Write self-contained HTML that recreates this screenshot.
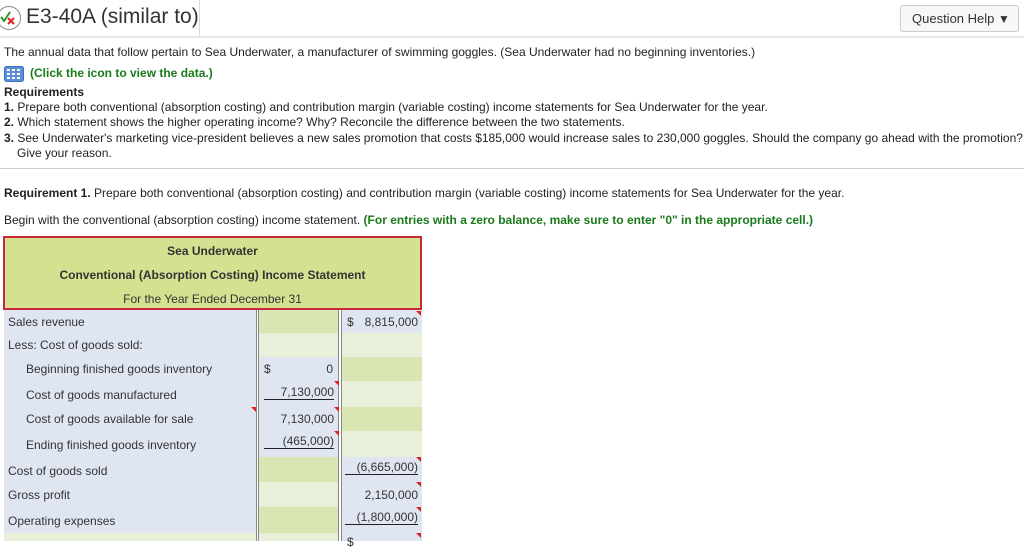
<!DOCTYPE html>
<html><head><meta charset="utf-8"><style>
*{margin:0;padding:0;box-sizing:border-box}
body{width:1024px;height:541px;overflow:hidden;background:#fff;font-family:"Liberation Sans",Arial,sans-serif;color:#222;font-size:12px;position:relative}
.a{position:absolute;white-space:nowrap}
.g{color:#1a7a1a;font-weight:bold}
.c{position:absolute;height:25px}
.G{background:#d9e6b3}.L{background:#e8f0da}.B{background:#dfe6f1}
.t{position:absolute;line-height:14px;white-space:nowrap;font-size:12px;color:#333}
.tri{position:absolute;width:0;height:0;border-top:5px solid #d22;border-left:5px solid transparent}
.ul{border-bottom:1px solid #222}
</style></head><body>
<div class="a" style="left:0;top:0;width:200px;height:36px;border-right:1px solid #d8dbe3"></div>
<div class="a" style="left:0;top:36px;width:1024px;height:2px;background:#e4e6ec"></div>
<svg class="a" style="left:-4px;top:5px" width="26" height="26" viewBox="0 0 26 26"><circle cx="13" cy="13" r="11.5" fill="#fff" stroke="#888" stroke-width="1"/><path d="M5 12l3 4 6-9" fill="none" stroke="#2a9a2a" stroke-width="2"/><path d="M12 13l6 6M18 13l-6 6" stroke="#d22" stroke-width="2"/></svg>
<div class="a" style="left:26px;top:5px;font-size:21px;color:#333">E3-40A (similar to)</div>
<div class="a" style="left:900px;top:5px;width:119px;height:27px;border:1px solid #ccc;border-radius:3px;background:#f7f7f7;font-size:13px;color:#333;line-height:25px;padding-left:11px">Question Help <span style="font-size:12px">▼</span></div>

<div class="a" style="left:4px;top:45px">The annual data that follow pertain to Sea Underwater, a manufacturer of swimming goggles. (Sea Underwater had no beginning inventories.)</div>
<svg class="a" style="left:4px;top:66px" width="20" height="16" viewBox="0 0 20 16"><rect x="0.5" y="0.5" width="19" height="15" rx="2" fill="#5b8fd6" stroke="#3a6fbf"/><g fill="#fff"><rect x="3" y="3" width="3" height="2"/><rect x="8" y="3" width="3" height="2"/><rect x="13" y="3" width="3" height="2"/><rect x="3" y="7" width="3" height="2"/><rect x="8" y="7" width="3" height="2"/><rect x="13" y="7" width="3" height="2"/><rect x="3" y="11" width="3" height="2"/><rect x="8" y="11" width="3" height="2"/><rect x="13" y="11" width="3" height="2"/></g></svg>
<div class="a g" style="left:30px;top:66px">(Click the icon to view the data.)</div>
<div class="a" style="left:4px;top:85px;font-weight:bold">Requirements</div>
<div class="a" style="left:4px;top:100px"><b>1.</b> Prepare both conventional (absorption costing) and contribution margin (variable costing) income statements for Sea Underwater for the year.</div>
<div class="a" style="left:4px;top:115px"><b>2.</b> Which statement shows the higher operating income? Why? Reconcile the difference between the two statements.</div>
<div class="a" style="left:4px;top:131px"><b>3.</b> See Underwater's marketing vice-president believes a new sales promotion that costs $185,000 would increase sales to 230,000 goggles. Should the company go ahead with the promotion?</div>
<div class="a" style="left:17px;top:146px">Give your reason.</div>
<div class="a" style="left:0;top:168px;width:1024px;height:1px;background:#c8ccd8"></div>
<div class="a" style="left:4px;top:186px"><b>Requirement 1.</b> Prepare both conventional (absorption costing) and contribution margin (variable costing) income statements for Sea Underwater for the year.</div>
<div class="a" style="left:4px;top:213px">Begin with the conventional (absorption costing) income statement. <span class="g">(For entries with a zero balance, make sure to enter "0" in the appropriate cell.)</span></div>

<div class="a" style="left:3px;top:236px;width:419px;height:74px;background:#d5e191;border:2px solid #c8283a"></div>
<div class="a" style="left:3px;top:244px;width:419px;text-align:center;font-weight:bold;color:#333">Sea Underwater</div>
<div class="a" style="left:3px;top:268px;width:419px;text-align:center;font-weight:bold;color:#333">Conventional (Absorption Costing) Income Statement</div>
<div class="a" style="left:3px;top:292px;width:419px;text-align:center;color:#333">For the Year Ended December 31</div>

<div class="a B" style="left:4px;top:310px;width:252px;height:223px"></div>
<div class="a L" style="left:4px;top:533px;width:252px;height:8px"></div>
<div class="a" style="left:256px;top:310px;width:3px;height:231px;border-left:1px solid #888;border-right:1px solid #888;background:#fff"></div>
<div class="a" style="left:338px;top:310px;width:4px;height:231px;border-left:1px solid #888;border-right:1px solid #888;background:#fff"></div>

<div class="c G" style="left:259px;top:310px;width:79px;height:23px"></div><div class="c B" style="left:342px;top:310px;width:80px;height:23px"></div>
<div class="c L" style="left:259px;top:333px;width:79px;height:24px"></div><div class="c L" style="left:342px;top:333px;width:80px;height:24px"></div>
<div class="c B" style="left:259px;top:357px;width:79px;height:24px"></div><div class="c G" style="left:342px;top:357px;width:80px;height:24px"></div>
<div class="c B" style="left:259px;top:381px;width:79px;height:26px"></div><div class="c L" style="left:342px;top:381px;width:80px;height:26px"></div>
<div class="c B" style="left:259px;top:407px;width:79px;height:24px"></div><div class="c G" style="left:342px;top:407px;width:80px;height:24px"></div>
<div class="c B" style="left:259px;top:431px;width:79px;height:26px"></div><div class="c L" style="left:342px;top:431px;width:80px;height:26px"></div>
<div class="c G" style="left:259px;top:457px;width:79px;height:25px"></div><div class="c B" style="left:342px;top:457px;width:80px;height:25px"></div>
<div class="c L" style="left:259px;top:482px;width:79px;height:25px"></div><div class="c B" style="left:342px;top:482px;width:80px;height:25px"></div>
<div class="c G" style="left:259px;top:507px;width:79px;height:26px"></div><div class="c B" style="left:342px;top:507px;width:80px;height:26px"></div>
<div class="c L" style="left:259px;top:533px;width:79px;height:8px"></div><div class="c B" style="left:342px;top:533px;width:80px;height:8px"></div>

<div class="t" style="left:8px;top:315px">Sales revenue</div>
<div class="t" style="left:8px;top:338px">Less: Cost of goods sold:</div>
<div class="t" style="left:26px;top:362px">Beginning finished goods inventory</div>
<div class="t" style="left:26px;top:388px">Cost of goods manufactured</div>
<div class="t" style="left:26px;top:412px">Cost of goods available for sale</div>
<div class="t" style="left:26px;top:438px">Ending finished goods inventory</div>
<div class="t" style="left:8px;top:464px">Cost of goods sold</div>
<div class="t" style="left:8px;top:488px">Gross profit</div>
<div class="t" style="left:8px;top:514px">Operating expenses</div>

<div class="t" style="left:347px;top:315px">$</div><div class="t" style="left:356px;top:315px;width:62px;text-align:right">8,815,000</div>
<div class="t" style="left:264px;top:362px">$</div><div class="t" style="left:290px;top:362px;width:43px;text-align:right">0</div>
<div class="t ul" style="left:264px;top:385px;width:70px;text-align:right">7,130,000</div>
<div class="t" style="left:264px;top:412px;width:70px;text-align:right">7,130,000</div>
<div class="t ul" style="left:264px;top:434px;width:70px;text-align:right">(465,000)</div>
<div class="t ul" style="left:345px;top:460px;width:73px;text-align:right">(6,665,000)</div>
<div class="t" style="left:345px;top:488px;width:73px;text-align:right">2,150,000</div>
<div class="t ul" style="left:345px;top:510px;width:73px;text-align:right">(1,800,000)</div>
<div class="t" style="left:347px;top:535px">$</div>

<div class="tri" style="left:416px;top:311px"></div>
<div class="tri" style="left:334px;top:381px"></div>
<div class="tri" style="left:251px;top:407px"></div>
<div class="tri" style="left:334px;top:407px"></div>
<div class="tri" style="left:334px;top:431px"></div>
<div class="tri" style="left:416px;top:457px"></div>
<div class="tri" style="left:416px;top:482px"></div>
<div class="tri" style="left:416px;top:507px"></div>
<div class="tri" style="left:416px;top:533px"></div>
</body></html>
